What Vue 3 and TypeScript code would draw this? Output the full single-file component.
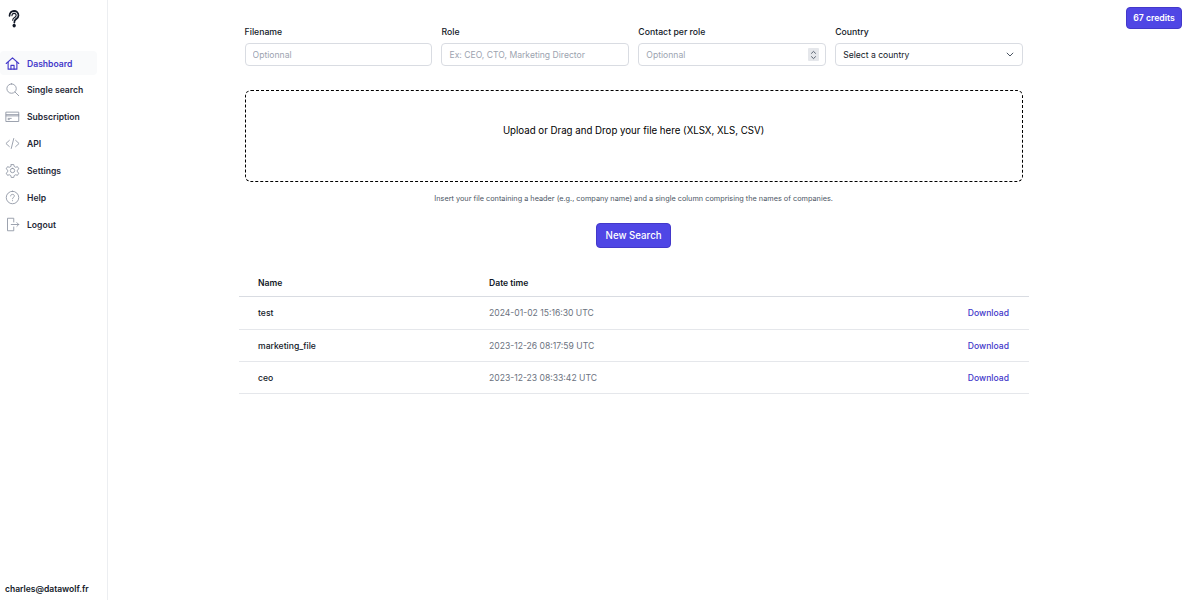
<template>
  <div class="page">
    <aside class="sidebar">
      <div class="logo">
        <svg width="12" height="18" viewBox="0 0 14 18" preserveAspectRatio="none" fill="none" stroke="#111827" stroke-linecap="round">
          <path d="M1.800 5.800C1.800 2.800 4.100 1 7 1s5.200 1.800 5.200 4.400c0 2.400-2 3.200-3.500 4.200-.9.6-1.300 1.400-1.300 2.800" stroke-width="2" />
          <path d="M4.600 5.700C4.600 4.300 5.600 3.300 7 3.300s2.500.9 2.500 2.100c0 1.200-1.200 1.800-2.300 2.400-.9.5-1.600 1.100-1.700 2.400" stroke-width="1.300" />
          <circle cx="7.200" cy="15.600" r="1.900" fill="#111827" stroke="none" />
        </svg>
      </div>
      <nav class="nav">
        <a v-for="item in navItems" :key="item.label" class="nav-item" :class="{ active: item.active }">
          <svg class="nav-icon" viewBox="0 0 24 24" fill="none" stroke="currentColor" stroke-linecap="round" stroke-linejoin="round">
            <path v-for="d in item.paths" :key="d" :d="d" />
          </svg>
          <span>{{ item.label }}</span>
        </a>
      </nav>
      <div class="user">charles@datawolf.fr</div>
    </aside>

    <main class="main">
      <button class="credits">67 credits</button>

      <div class="filters">
        <label class="field">
          <span>Filename</span>
          <input type="text" placeholder="Optionnal" />
        </label>
        <label class="field">
          <span>Role</span>
          <input type="text" placeholder="Ex: CEO, CTO, Marketing Director" />
        </label>
        <label class="field">
          <span>Contact per role</span>
          <div class="input-box">
            <em>Optionnal</em>
            <i class="spinner">
              <svg width="7" height="10" viewBox="0 0 7 10" fill="none" stroke="#4b5563" stroke-width="0.9">
                <path d="M1.200 3.600 3.500 1.400l2.300 2.200M1.200 6.400l2.300 2.200 2.300-2.200" />
              </svg>
            </i>
          </div>
        </label>
        <label class="field">
          <span>Country</span>
          <div class="input-box select">
            <b>Select a country</b>
            <svg width="8" height="5" viewBox="0 0 8 5" fill="none" stroke="#4b5563" stroke-width="1">
              <path d="M.8.800 4 4l3.200-3.200" />
            </svg>
          </div>
        </label>
      </div>

      <div class="dropzone">Upload or Drag and Drop your file here (XLSX, XLS, CSV)</div>
      <p class="hint">Insert your file containing a header (e.g., company name) and a single column comprising the names of companies.</p>
      <div class="action">
        <button class="new-search">New Search</button>
      </div>

      <div class="table">
        <div class="row head">
          <div>Name</div>
          <div>Date time</div>
          <div></div>
        </div>
        <div v-for="row in rows" :key="row.name" class="row">
          <div class="name">{{ row.name }}</div>
          <div class="date">{{ row.date }}</div>
          <a class="download">Download</a>
        </div>
      </div>
    </main>
  </div>
</template>

<script setup lang="ts">
interface NavItem {
  label: string
  paths: string[]
  active?: boolean
}

const navItems: NavItem[] = [
  {
    label: 'Dashboard',
    active: true,
    paths: ['M2 12 12 3l10 9', 'M5 10v11h14V10', 'M9.500 21v-6h5v6']
  },
  {
    label: 'Single search',
    paths: ['M10.500 3a7.500 7.500 0 1 0 0 15 7.500 7.500 0 0 0 0-15Z', 'M16 16l6 6']
  },
  {
    label: 'Subscription',
    paths: ['M2 5h20v15H2Z', 'M2 9h20', 'M2 11h20', 'M5 15h5', 'M5 17h2']
  },
  {
    label: 'API',
    paths: ['M7 7l-5.500 5L7 17', 'M17 7l5.500 5-5.500 5', 'M14 4l-4 16']
  },
  {
    label: 'Settings',
    paths: [
      'M10 2.500h4l.7 3 2.300 1.300 3-.9 2 3.400-2.200 2.200v2.600l2.200 2.200-2 3.400-3-.9-2.300 1.300-.7 3h-4l-.7-3-2.300-1.300-3 .9-2-3.400 2.200-2.200v-2.600L2 9.300l2-3.400 3 .9 2.300-1.300Z',
      'M12 8.500a3.500 3.500 0 1 0 0 7 3.500 3.500 0 0 0 0-7Z'
    ]
  },
  {
    label: 'Help',
    paths: [
      'M12 2a10 10 0 1 0 0 20 10 10 0 0 0 0-20Z',
      'M9 9.500C9 7.800 10.300 7 12 7s3 1 3 2.500c0 2.300-3 2.300-3 4.500',
      'M12 17v.2'
    ]
  },
  {
    label: 'Logout',
    paths: ['M14 8V2H4v20h10v-6', 'M10 12h12', 'M19 9l3 3-3 3']
  }
]

const rows = [
  { name: 'test', date: '2024-01-02 15:16:30 UTC' },
  { name: 'marketing_file', date: '2023-12-26 08:17:59 UTC' },
  { name: 'ceo', date: '2023-12-23 08:33:42 UTC' }
]
</script>

<style scoped>
.page {
  display: flex;
  height: 600px;
  overflow: hidden;
  background: #fff;
  font-family: Inter, "Liberation Sans", sans-serif;
  color: #111827;
}

.sidebar {
  position: relative;
  flex: 0 0 108px;
  box-sizing: border-box;
  border-right: 1px solid #eceef1;
}

.logo {
  height: 51px;
  padding: 10px 0 0 8px;
  box-sizing: border-box;
}

.nav {
  display: flex;
  flex-direction: column;
  gap: 2.850px;
  width: 97px;
}

.nav-item {
  display: flex;
  align-items: center;
  gap: 7px;
  height: 24px;
  padding-left: 5px;
  border-radius: 4px;
  font-size: 8.600px;
  font-weight: 600;
  color: #1f2937;
}

.nav-item span {
  margin-top: 1px;
}

.nav-item.active {
  background: #f9fafb;
  color: #4338ca;
}

.nav-icon {
  width: 15px;
  height: 15px;
  color: #8f96a3;
  stroke-width: 1.400;
  flex: none;
}

.active .nav-icon {
  color: #4338ca;
  stroke-width: 1.800;
}

.user {
  position: absolute;
  left: 5px;
  bottom: 6px;
  font-size: 8.500px;
  font-weight: 600;
  color: #111827;
  white-space: nowrap;
}

.main {
  position: relative;
  flex: 1;
  padding: 27px 0 0 136.600px;
}

.credits {
  position: absolute;
  top: 7px;
  right: 7px;
  width: 56px;
  height: 22px;
  padding: 0;
  border: 1px solid #4338ca;
  border-radius: 4px;
  background: #4f46e5;
  color: #fff;
  font: 600 8.700px Inter, sans-serif;
}

.filters {
  display: grid;
  grid-template-columns: repeat(4, 1fr);
  gap: 9.500px;
  width: 778px;
}

.field {
  display: flex;
  flex-direction: column;
  gap: 5px;
}

.field > span {
  font-size: 8.700px;
  font-weight: 500;
  line-height: 11px;
  color: #111827;
}

.field input,
.input-box {
  display: flex;
  align-items: center;
  justify-content: space-between;
  box-sizing: border-box;
  width: 100%;
  height: 23px;
  padding: 0 7px;
  border: 1px solid #d9dce2;
  border-radius: 4px;
  outline: none;
  background: #fff;
  font: 400 8.600px Inter, sans-serif;
}

.field input::placeholder,
.input-box em {
  color: #9ca3af;
  font-style: normal;
}

.input-box b {
  font-weight: 400;
  color: #111827;
}

.input-box.select {
  padding-right: 8px;
}

.spinner {
  display: flex;
  align-items: center;
  justify-content: center;
  width: 11px;
  height: 13px;
  margin-right: -1px;
  background: #e5e7eb;
  border-radius: 1px;
}

.dropzone {
  display: flex;
  align-items: center;
  justify-content: center;
  box-sizing: border-box;
  width: 778px;
  height: 92px;
  margin-top: 24px;
  padding-bottom: 12px;
  border: 1px dashed #000;
  border-radius: 6px;
  font-size: 9.700px;
  color: #000;
}

.hint {
  width: 778px;
  margin: 11.500px 0 0;
  font-size: 7.320px;
  line-height: 10px;
  text-align: center;
  color: #4b5563;
}

.action {
  display: flex;
  justify-content: center;
  width: 778px;
  margin-top: 19.500px;
}

.new-search {
  width: 75px;
  height: 25px;
  padding: 0;
  border: 1px solid #4338ca;
  border-radius: 4px;
  background: #4f46e5;
  color: #fff;
  font: 500 9.700px Inter, sans-serif;
}

.table {
  width: 790px;
  margin: 21px 0 0 -5.600px;
}

.row {
  display: grid;
  grid-template-columns: 231px 1fr auto;
  align-items: center;
  height: 32px;
  padding: 0 20px 0 19px;
  border-bottom: 1px solid #e5e7eb;
  box-sizing: border-box;
  font-size: 8.600px;
}

.row.head {
  height: 28px;
  font-weight: 600;
  color: #111827;
  border-bottom-color: #d9dce2;
}

.row:nth-child(2) {
  height: 33px;
}

.name {
  font-weight: 500;
  color: #111827;
}

.date {
  color: #6b7280;
}

.download {
  color: #4338ca;
  font-weight: 500;
}
</style>
